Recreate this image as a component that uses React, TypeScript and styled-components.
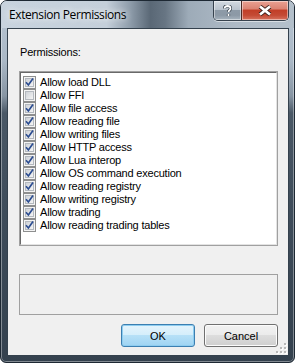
import React from 'react';
import styled, { createGlobalStyle } from 'styled-components';

const GlobalStyle = createGlobalStyle`
  html, body {
    margin: 0;
    padding: 0;
    background: #ffffff;
  }
  * {
    box-sizing: border-box;
  }
`;

const Window = styled.div`
  width: 295px;
  height: 363px;
  border: 1px solid #1d2833;
  border-radius: 7px 7px 6px 6px;
  background: linear-gradient(
    to bottom,
    #b9c6d3 0px,
    #aab8c6 60px,
    #8795a3 95px,
    #4a5866 112px,
    #3f4d5b 200px,
    #34414e 100%
  );
  box-shadow: inset 0 0 0 1px rgba(255, 255, 255, 0.38);
  display: flex;
  flex-direction: column;
  overflow: hidden;
  font-family: 'Liberation Sans', Arial, sans-serif;
`;

const TitleBar = styled.div`
  height: 27px;
  display: flex;
  align-items: flex-start;
  padding: 0 5px 0 7px;
  background: linear-gradient(
    90deg,
    #c8d3de 0%,
    #c4cfda 36%,
    #8f9dab 44%,
    #5a6876 51%,
    #677583 56%,
    #9dabb8 64%,
    #aebac6 80%,
    #b4c0cb 100%
  );
`;

const Title = styled.div`
  font-family: 'Open Sans', 'Noto Sans', sans-serif;
  font-size: 12px;
  line-height: 16px;
  padding-top: 6px;
  padding-left: 1px;
  color: #000000;
  letter-spacing: -0.4px;
  text-shadow: 0 0 6px rgba(255, 255, 255, 0.9), 0 0 10px rgba(255, 255, 255, 0.7);
`;

const CaptionGroup = styled.div`
  margin-left: auto;
  display: flex;
  border: 1px solid #37424e;
  border-top: none;
  border-radius: 0 0 5px 5px;
  overflow: hidden;
  box-shadow: 0 1px 0 rgba(255, 255, 255, 0.5);
`;

const CaptionButton = styled.div<{ $variant: 'help' | 'close' }>`
  width: ${({ $variant }) => ($variant === 'close' ? '47px' : '27px')};
  height: 19px;
  display: flex;
  align-items: center;
  justify-content: center;
  border-left: ${({ $variant }) => ($variant === 'close' ? '1px solid #4d2a25' : 'none')};
  background: ${({ $variant }) =>
    $variant === 'close'
      ? 'linear-gradient(to bottom, #e9a193 0%, #db8474 40%, #c23f28 50%, #c44a34 75%, #d8735f 100%)'
      : 'linear-gradient(to bottom, #d3dae1 0%, #bac4ce 45%, #8d9aa7 50%, #8c99a6 75%, #a9b5c0 100%)'};
  box-shadow: inset 0 0 0 1px rgba(255, 255, 255, 0.45);
`;

const Client = styled.div`
  position: relative;
  margin: 0 5px 6px 6px;
  flex: 1;
  border: 1px solid #34414d;
  background: #f0f0f0;
  padding: 17px 10px 0 11px;
  display: flex;
  flex-direction: column;
`;

const Label = styled.div`
  font-size: 11px;
  line-height: 13px;
  color: #000000;
  padding-left: 1px;
  letter-spacing: -0.2px;
`;

const ListBox = styled.div`
  margin-top: 12px;
  height: 175px;
  border: 1px solid #a0a0a0;
  background: #ffffff;
`;

const ListInner = styled.div`
  height: 100%;
  border-top: 1px solid #696969;
  border-left: 1px solid #696969;
  border-right: 1px solid #e3e3e3;
  border-bottom: 1px solid #e3e3e3;
  padding: 3px 0 0 2px;
  display: flex;
  flex-direction: column;
`;

const Row = styled.div`
  height: 13px;
  display: flex;
  align-items: center;
  gap: 4px;
  font-size: 11px;
  line-height: 13px;
  color: #000000;
  white-space: nowrap;
  letter-spacing: -0.2px;
`;

const InfoPanel = styled.div`
  margin-top: 28px;
  height: 41px;
  border: 1px solid #a0a0a0;
`;

const ButtonRow = styled.div`
  margin-top: 9px;
  display: flex;
  justify-content: flex-end;
  gap: 9px;
`;

const Button = styled.div<{ $default?: boolean }>`
  width: 74px;
  height: 23px;
  border-radius: 3px;
  display: flex;
  align-items: center;
  justify-content: center;
  font-size: 11px;
  color: #000000;
  border: 1px solid ${({ $default }) => ($default ? '#3c7fb1' : '#707070')};
  background: ${({ $default }) =>
    $default
      ? 'linear-gradient(to bottom, #e5f4fc 0%, #d4eefb 50%, #b6e0f7 50%, #9fd4f3 100%)'
      : 'linear-gradient(to bottom, #f2f2f2 0%, #ebebeb 50%, #dddddd 50%, #cfcfcf 100%)'};
  box-shadow: inset 0 0 0 1px ${({ $default }) => ($default ? '#8ecdf0' : '#fcfcfc')};
`;

const Grip = styled.svg`
  position: absolute;
  right: 1px;
  bottom: 1px;
`;

const items: [string, boolean][] = [
  ['Allow load DLL', true],
  ['Allow FFI', false],
  ['Allow file access', true],
  ['Allow reading file', true],
  ['Allow writing files', true],
  ['Allow HTTP access', true],
  ['Allow Lua interop', true],
  ['Allow OS command execution', true],
  ['Allow reading registry', true],
  ['Allow writing registry', true],
  ['Allow trading', true],
  ['Allow reading trading tables', true],
];

const CheckBox = ({ checked }: { checked: boolean }) => (
  <svg width="13" height="13" viewBox="0 0 13 13">
    <defs>
      <linearGradient id="cbfill" x1="0" y1="0" x2="1" y2="1">
        <stop offset="0" stopColor="#cbcfd5" />
        <stop offset="1" stopColor="#f7f7f7" />
      </linearGradient>
    </defs>
    <rect x="0.5" y="0.5" width="12" height="12" fill="#f4f4f4" stroke="#8e8f8f" />
    <rect x="2.5" y="2.5" width="8" height="8" fill="url(#cbfill)" stroke="#b4b9bf" />
    {checked && (
      <path d="M3 6.2 L5.4 9 L10 2.6" fill="none" stroke="#2c4d91" strokeWidth="1.7" />
    )}
  </svg>
);

export default function App() {
  return (
    <>
      <GlobalStyle />
      <Window>
        <TitleBar>
          <Title>Extension Permissions</Title>
          <CaptionGroup>
            <CaptionButton $variant="help">
              <svg width="9" height="12" viewBox="0 0 9 12">
                <path
                  d="M1.5 3.5 C1.5 1.5 3 1 4.5 1 C6.5 1 7.5 2 7.5 3.4 C7.5 5 5.5 5.3 5.5 7 M5.5 9 L5.5 11"
                  fill="none"
                  stroke="#2f3a45"
                  strokeWidth="3.2"
                />
                <path
                  d="M1.5 3.5 C1.5 1.5 3 1 4.5 1 C6.5 1 7.5 2 7.5 3.4 C7.5 5 5.5 5.3 5.5 7 M5.5 9 L5.5 11"
                  fill="none"
                  stroke="#ffffff"
                  strokeWidth="1.8"
                />
              </svg>
            </CaptionButton>
            <CaptionButton $variant="close">
              <svg width="14" height="11" viewBox="0 0 14 11">
                <path d="M2 1.5 L12 9.5 M12 1.5 L2 9.5" stroke="#3a1f1a" strokeWidth="4.4" />
                <path d="M2 1.5 L12 9.5 M12 1.5 L2 9.5" stroke="#ffffff" strokeWidth="2.8" />
              </svg>
            </CaptionButton>
          </CaptionGroup>
        </TitleBar>
        <Client>
          <Label>Permissions:</Label>
          <ListBox>
            <ListInner>
              {items.map(([label, checked]) => (
                <Row key={label}>
                  <CheckBox checked={checked} />
                  {label}
                </Row>
              ))}
            </ListInner>
          </ListBox>
          <InfoPanel />
          <ButtonRow>
            <Button $default>OK</Button>
            <Button>Cancel</Button>
          </ButtonRow>
          <Grip width="11" height="11" viewBox="0 0 11 11">
            {[
              [8, 0],
              [8, 4],
              [4, 4],
              [8, 8],
              [4, 8],
              [0, 8],
            ].map(([x, y]) => (
              <g key={`${x}-${y}`}>
                <rect x={x + 1} y={y + 1} width="2" height="2" fill="#ffffff" />
                <rect x={x} y={y} width="2" height="2" fill="#b8b8b8" />
              </g>
            ))}
          </Grip>
        </Client>
      </Window>
    </>
  );
}
